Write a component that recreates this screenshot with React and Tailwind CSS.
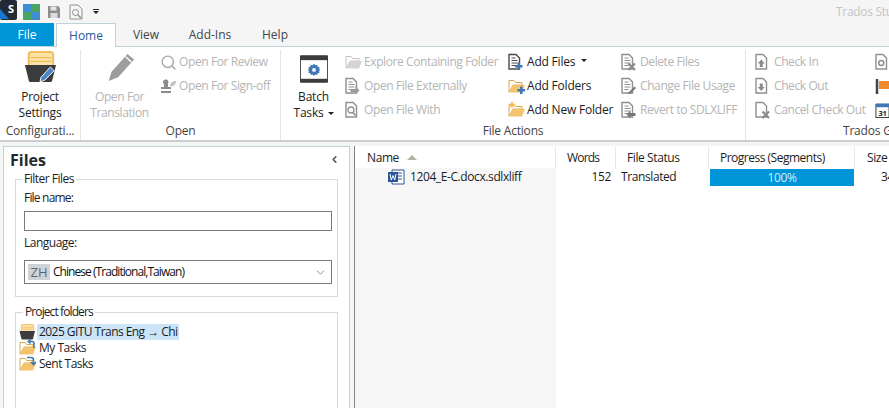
import { ChevronDown, ChevronLeft, Search } from 'lucide-react'

const DocIcon = ({ overlay, color = '#6f6f6f', lines = true }) => (
  <svg width="17" height="18" viewBox="2.500 0 17 18" className="shrink-0">
    <path d="M3.500 1.500h7l3.500 3.500v11h-10.500z" fill="#fff" stroke={color} strokeWidth="1.400" />
    {lines && <path d="M6 5h4M6 7.500h6M6 10h6M6 12.500h4" stroke={color} strokeWidth="1" />}
    {overlay}
  </svg>
)

const FolderIcon = ({ overlay, fill = '#f4c46c', stroke = '#dca84a' }) => (
  <svg width="17" height="18" viewBox="0 0 17 18" className="shrink-0">
    <path d="M1 15V3.500h5l1.500 2h6.500V8H5L1.500 15z" fill="#fff" stroke={stroke} strokeWidth="1" />
    <path d="M1.500 15.500 5 8h12l-3 7.500z" fill={fill} />
    {overlay}
  </svg>
)

const PlusMark = () => <path d="M12 9.500h2.500V12H17v2.500h-2.500V17H12v-2.500H9.500V12H12z" fill="#3f78b5" />
const XMark = ({ color = '#777' }) => <path d="M10 10.500l6.500 6.500M16.500 10.500L10 17" stroke={color} strokeWidth="2.200" />
const ArrowRight = ({ color = '#777' }) => <path d="M8 12h5v-2.500l4 4-4 4V15H8z" fill={color} />
const ArrowBack = ({ color = '#777' }) => <path d="M17 15h-5v2.500l-4-4 4-4V12h5z" fill={color} />
const PenMark = ({ color = '#777' }) => <path d="M10 15.500l6-6 1.500 1.500-6 6H10z" fill={color} />
const UpMark = ({ color = '#8a8a8a' }) => <path d="M8.750 6.500l3.500 4h-2v3.500h-3v-3.500h-2z" fill={color} />
const DownMark = ({ color = '#8a8a8a' }) => <path d="M8.750 14l3.500-4h-2V6.500h-3V10h-2z" fill={color} />

const ProjectIcon = ({ small }) => (
  <svg width={small ? 16 : 32} height={small ? 16 : 32} viewBox="0 0 34 34" className="shrink-0">
    <path d="M5 4c0-2 1-3 3-3h20c2 0 3 1 3 3v12H5z" fill="#fbe3a8" stroke="#f0bd5a" strokeWidth="2" />
    <path d="M7 7h22M7 11h22" stroke="#f0bd5a" strokeWidth="1.500" />
    <path d="M1 15h33l-4 16c-.3 1-1 2-2 2H7c-1 0-2-1-2-2z" fill="#3c3c3c" />
    {!small && <path d="M18 28l10-11 4 4-10 10-5 2z" fill="#4a86c5" stroke="#fff" strokeWidth="1" />}
  </svg>
)

const SmallAction = ({ icon, label, disabled, caret }) => (
  <div className={`flex items-center h-6 gap-[2px] whitespace-nowrap ${disabled ? 'text-[#b4b4b4] tracking-[-0.4px]' : 'text-[#1c1c1c]'}`}>
    {icon}
    <span>{label}</span>
    {caret && <span className="ml-1 mb-1 border-x-[3px] border-t-[3px] border-x-transparent border-t-[#222]" />}
  </div>
)

const Group = ({ label, className = '', children }) => (
  <div className={`flex flex-col shrink-0 h-[90px] border-r border-[#e4e4e4] ${className}`}>
    <div className="flex flex-1 min-h-0">{children}</div>
    <div className="h-[19px] pt-[1px] text-center text-[#444] whitespace-nowrap overflow-hidden">{label}</div>
  </div>
)

const Ribbon = () => (
  <div className="flex h-[94px] bg-white border-t border-[#bfd0d6] pt-[3px] text-[12px] tracking-[-0.2px]">
    <Group label="Configurati..." className="w-[81px]">
      <div className="w-full flex flex-col items-center text-[#222] leading-[16px]">
        <div className="h-[39px] flex items-start pt-[1px]">
          <ProjectIcon />
        </div>
        <div className="text-center">Project<br />Settings</div>
      </div>
    </Group>

    <Group label="Open" className="w-[200px]">
      <div className="w-[77px] shrink-0 flex flex-col items-center text-[#b4b4b4] leading-[16px] tracking-[-0.4px]">
        <div className="h-[39px] pt-[2px]">
          <svg width="32" height="31" viewBox="0 0 34 33">
            <path d="M25 2l7 6-17 19-10 4 3-10z" fill="#9d9d9d" />
            <path d="M23 5l6 5.500" stroke="#fff" strokeWidth="1.500" />
          </svg>
        </div>
        <div className="text-center">Open For<br />Translation</div>
      </div>
      <div className="pl-[2px]">
        <SmallAction disabled label="Open For Review" icon={<Search size={17} strokeWidth={2} color="#a8a8a8" className="shrink-0" />} />
        <SmallAction
          disabled
          label="Open For Sign-off"
          icon={
            <svg width="17" height="17" viewBox="0 0 17 17" className="shrink-0">
              <path d="M6 1.500a2.500 2.500 0 0 1 2 4L8 9h3v2H1V9h3V6a2.500 2.500 0 0 1 2-4.500zM1 13h10v2H1z" fill="#8d8d8d" />
              <path d="M10 8c0-3 3-5 6-5 0 3-2 6-6 5z" fill="#c0c0c0" />
            </svg>
          }
        />
      </div>
    </Group>

    <Group label="File Actions" className="w-[465px]">
      <div className="w-[63px] shrink-0 flex flex-col items-center text-[#222] leading-[16px] pl-[2px]">
        <div className="h-[39px] pt-[5px]">
          <svg width="28" height="28" viewBox="0 0 30 29">
            <rect x="0.500" y="0.500" width="29" height="28" rx="1" fill="#fff" stroke="#3d3d3d" />
            <rect x="0" y="0" width="30" height="5" fill="#3d3d3d" />
            <rect x="0" y="25" width="30" height="4" fill="#3d3d3d" />
            <path d="M15 9l1.500 1.500 2-.5.500 2 2 .5-.5 2 1 1-1 1 .5 2-2 .5-.5 2-2-.5-1.500 1.500-1.500-1.500-2 .5-.5-2-2-.5.5-2-1-1 1-1-.5-2 2-.5.5-2 2 .5z" fill="#3f78b5" />
            <circle cx="15" cy="15.500" r="2" fill="#fff" />
          </svg>
        </div>
        <div className="text-center">
          Batch
          <br />
          <span className="inline-flex items-center gap-1">
            Tasks
            <span className="border-x-[3px] border-t-[3px] border-x-transparent border-t-[#222]" />
          </span>
        </div>
      </div>
      <div className="w-[164px] shrink-0 pl-[1px]">
        <SmallAction disabled label="Explore Containing Folder" icon={<FolderIcon fill="#d4d4d4" stroke="#c2c2c2" />} />
        <SmallAction disabled label="Open File Externally" icon={<DocIcon color="#8f8f8f" overlay={<ArrowRight color="#9a9a9a" />} />} />
        <SmallAction
          disabled
          label="Open File With"
          icon={<DocIcon color="#8f8f8f" lines={false} overlay={<><circle cx="8.500" cy="9" r="3" fill="#fff" stroke="#8f8f8f" strokeWidth="1.300" /><path d="M10.500 11.500l2.500 3" stroke="#8f8f8f" strokeWidth="1.500" /></>} />}
        />
      </div>
      <div className="w-[113px] shrink-0">
        <SmallAction label="Add Files" caret icon={<DocIcon color="#4a4a4a" overlay={<PlusMark />} />} />
        <SmallAction label="Add Folders" icon={<FolderIcon overlay={<PlusMark />} />} />
        <SmallAction
          label="Add New Folder"
          icon={<FolderIcon overlay={<path d="M4 0l1 2.500 2.500.5-2 1.500.5 2.500L4 5.500 2 7l.5-2.500-2-1.500L3 2.500z" fill="#f0b94a" />} />}
        />
      </div>
      <div className="shrink-0">
        <SmallAction disabled label="Delete Files" icon={<DocIcon color="#8f8f8f" overlay={<XMark color="#8a8a8a" />} />} />
        <SmallAction disabled label="Change File Usage" icon={<DocIcon color="#8f8f8f" overlay={<PenMark />} />} />
        <SmallAction disabled label="Revert to SDLXLIFF" icon={<DocIcon color="#8f8f8f" overlay={<ArrowBack />} />} />
      </div>
    </Group>

    <div className="flex flex-col flex-1 min-w-0 h-[90px] whitespace-nowrap">
      <div className="flex flex-1 min-h-0 pl-[9px]">
        <div className="w-[119px] shrink-0">
          <SmallAction disabled label="Check In" icon={<DocIcon color="#8f8f8f" lines={false} overlay={<UpMark />} />} />
          <SmallAction disabled label="Check Out" icon={<DocIcon color="#8f8f8f" lines={false} overlay={<DownMark />} />} />
          <SmallAction disabled label="Cancel Check Out" icon={<DocIcon color="#8f8f8f" lines={false} overlay={<XMark color="#8a8a8a" />} />} />
        </div>
        <div className="pl-[1px]">
          <div className="h-6 flex items-center">
            <DocIcon color="#8f8f8f" lines={false} overlay={<circle cx="8.750" cy="10" r="2.500" fill="none" stroke="#8f8f8f" strokeWidth="1.500" />} />
          </div>
          <div className="h-6 flex items-center">
            <svg width="16" height="18" viewBox="0 0 16 18">
              <path d="M2 2v15" stroke="#444" strokeWidth="2.500" />
              <path d="M4 4h12v8H4z" fill="#f08b2d" />
            </svg>
          </div>
          <div className="h-6 flex items-center">
            <svg width="15" height="17" viewBox="0 0 16 17">
              <rect x="1" y="2" width="14" height="14" fill="#fff" stroke="#333" />
              <rect x="1" y="1" width="14" height="4" fill="#3f78b5" />
              <text x="8" y="14" fontSize="8" textAnchor="middle" fill="#222" fontWeight="700">31</text>
            </svg>
          </div>
        </div>
      </div>
      <div className="h-[19px] pt-[1px] pl-[97px] text-[#444]">Trados G</div>
    </div>
  </div>
)

const Legend = ({ className = '', children }) => (
  <legend className={`-ml-[2px] px-[2px] text-[#1c1c1c] leading-[14px] ${className}`}>{children}</legend>
)

const FilesPanel = () => (
  <div className="w-[347px] shrink-0 h-full border border-b-0 border-[#bcd0d8] bg-white px-[11px] text-[12px] text-[#1c1c1c] tracking-[-0.5px]">
    <div className="flex items-center justify-between h-[25px] -mx-[5px] pr-[3px]">
      <h1 className="text-[16px] leading-[20px] font-bold text-[#1f2a30] tracking-normal">Files</h1>
      <ChevronLeft size={11} strokeWidth={3.500} color="#555" />
    </div>
    <fieldset className="h-[125px] border border-[#d9d9d9] pl-[8px] pr-[5px]">
      <Legend>Filter Files</Legend>
      <div className="mt-[4px] h-[16px] leading-[16px] tracking-[-0.8px]">File name:</div>
      <div className="mt-[5px] h-[20px] border border-[#7a7a7a] bg-white" />
      <div className="mt-[4px] h-[16px] leading-[16px]">Language:</div>
      <div className="mt-[9px] h-[24px] border border-[#7a7a7a] flex items-center pl-[3px] pr-[4px]">
        <span className="w-[22px] h-[16px] bg-[#cfd3d8] text-[#5c6670] text-[13px] leading-[16px] text-center tracking-normal">ZH</span>
        <span className="ml-[3px] flex-1 tracking-[-0.95px] text-[#111]">Chinese (Traditional,Taiwan)</span>
        <ChevronDown size={13} strokeWidth={1.200} color="#555" />
      </div>
    </fieldset>
    <fieldset className="mt-[8px] h-[120px] border border-[#d9d9d9] pl-[4px] pr-[5px]">
      <Legend className="ml-[3px] tracking-[-0.9px]">Project folders</Legend>
      <div className="mt-[5px] flex items-center h-4 gap-[2px] -ml-[1px]">
        <ProjectIcon small />
        <span className="bg-[#cce4f7] px-[2px] h-[16px] leading-[16px] tracking-[-0.55px]">2025 GITU Trans Eng → Chi</span>
      </div>
      <div className="flex items-center h-4 gap-[3px] -ml-[1px]">
        <FolderIcon overlay={<path d="M15 9V4.500a2 2 0 0 0-2-2H9.500l2-2M9.500 2.500l2 2" fill="none" stroke="#3f78b5" strokeWidth="1.600" />} />
        <span>My Tasks</span>
      </div>
      <div className="flex items-center h-4 gap-[3px] -ml-[1px]">
        <FolderIcon overlay={<path d="M8 2.500h4a2.500 2.500 0 0 1 2.500 2.500v4M12 7l2.500 2.500L17 7" fill="none" stroke="#3f78b5" strokeWidth="1.600" />} />
        <span>Sent Tasks</span>
      </div>
    </fieldset>
  </div>
)

const HeaderCell = ({ className = '', children }) => (
  <div className={`shrink-0 h-full border-r border-[#e6e6e6] flex items-center whitespace-nowrap ${className}`}>{children}</div>
)

const FilesTable = () => (
  <div className="flex-1 min-w-0 h-full border-l border-[#7d858a] bg-white overflow-hidden text-[12px] text-[#1c1c1c] tracking-[-0.4px]">
    <div className="flex h-[22px] pt-[1px]">
      <HeaderCell className="w-[201px] pl-[12px] gap-[8px]">
        Name
        <span className="border-x-[5px] border-b-[5px] border-x-transparent border-b-[#b5b2a8]" />
      </HeaderCell>
      <HeaderCell className="w-[60px] pl-[11px] tracking-[-0.8px]">Words</HeaderCell>
      <HeaderCell className="w-[93px] pl-[11px]">File Status</HeaderCell>
      <HeaderCell className="w-[146px] pl-[11px] tracking-[-0.5px]">Progress (Segments)</HeaderCell>
      <div className="pl-[12px] flex items-center">Size</div>
    </div>
    <div className="flex h-[240px]">
      <div className="w-[201px] shrink-0 h-full bg-[#f6f6f6] flex items-start pl-[33px] pt-[1px] gap-[5px]">
        <svg width="17" height="16" viewBox="0 0 17 16" className="shrink-0">
          <path d="M4 1h12v14H4z" fill="#fff" stroke="#2b579a" />
          <path d="M10 4h4M10 7h4M10 10h4" stroke="#2b579a" />
          <rect x="0" y="3" width="10" height="10" fill="#2b579a" />
          <path d="M2 5l1.300 6 1.700-4.500L6.700 11 8 5" stroke="#fff" strokeWidth="1" fill="none" />
        </svg>
        <span className="leading-[16px] whitespace-nowrap">1204_E-C.docx.sdlxliff</span>
      </div>
      <div className="w-[55px] shrink-0 text-right leading-[18px]">152</div>
      <div className="w-[99px] shrink-0 leading-[18px] pl-[10px]">Translated</div>
      <div className="w-[144px] shrink-0 mt-[1px] h-[17px] bg-[#0095d9] text-[#cfeefb] text-center leading-[17px]">100%</div>
      <div className="ml-[27px] leading-[18px]">34</div>
    </div>
  </div>
)

export default function App() {
  return (
    <div className="w-[889px] h-[408px] overflow-hidden bg-[#f5f5f5] font-['Open_Sans','Noto_Sans',sans-serif]">
      <div className="flex items-center h-[23px] text-[12px]">
        <svg width="17" height="20" viewBox="0 0 17 20" className="-mt-[3px]">
          <rect width="17" height="20" rx="2" fill="#232a36" />
          <path d="M0 9l9 10H0z" fill="#1677d2" />
          <text x="11" y="13" fontSize="11" fontWeight="700" fill="#fff" textAnchor="middle">S</text>
        </svg>
        <svg width="17" height="16" viewBox="0 0 17 16" className="ml-[6px]">
          <rect width="8" height="8" fill="#3d8fd1" />
          <rect x="8" width="9" height="8" fill="#4aa564" />
          <rect y="8" width="8" height="8" fill="#4aa564" />
          <rect x="8" y="8" width="9" height="8" fill="#3d8fd1" />
        </svg>
        <svg width="14" height="14" viewBox="0 0 14 14" className="ml-[7px]">
          <path d="M1 1h10l2 2v10H1z" fill="#8e8e8e" />
          <rect x="3.500" y="1.500" width="6" height="4" fill="#e5e5e5" />
          <rect x="3.500" y="8" width="7" height="5" fill="#dcdcdc" />
        </svg>
        <svg width="14" height="16" viewBox="0 0 14 16" className="ml-[8px]">
          <path d="M1 1h8l4 4v10H1z" fill="#f5f5f5" stroke="#8e8e8e" />
          <circle cx="6.500" cy="8.500" r="3" fill="none" stroke="#8e8e8e" />
          <path d="M9 11l3 3" stroke="#8e8e8e" strokeWidth="1.500" />
        </svg>
        <div className="ml-[10px] flex flex-col items-center gap-[1px]">
          <span className="w-[6px] h-px bg-[#222]" />
          <span className="border-x-[3px] border-t-[3px] border-x-transparent border-t-[#222]" />
        </div>
        <div className="flex-1" />
        <span className="w-[53px] overflow-hidden text-[#c4c4c4] whitespace-nowrap tracking-[-0.3px] pt-[1px]">Trados Stu</span>
      </div>

      <div className="flex h-[23px] text-[12px] text-[#444]">
        <div className="w-[54px] bg-[#0095d9] text-white flex items-center justify-center">File</div>
        <div className="w-[60px] ml-[2px] bg-white border border-b-0 border-[#bfd0d6] text-[#2b579a] flex items-center justify-center relative z-10 h-[24px]">Home</div>
        <div className="w-[60px] flex items-center justify-center">View</div>
        <div className="w-[68px] flex items-center justify-center">Add-Ins</div>
        <div className="w-[62px] flex items-center justify-center">Help</div>
      </div>

      <Ribbon />
      <div className="h-[6px] bg-[#f5f5f5] border-t-[2px] border-[#c9ced1]" />

      <div className="flex h-[262px] pl-[3px] gap-[4px]">
        <FilesPanel />
        <FilesTable />
      </div>
    </div>
  )
}
